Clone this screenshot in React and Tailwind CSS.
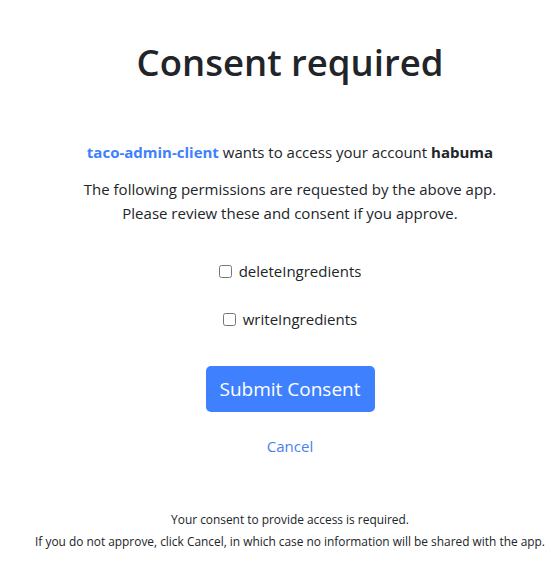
export default function App() {
  return (
    <div className="min-h-[580px] bg-white text-[#212529] font-['Open_Sans',sans-serif] text-center">
      <div className="pt-[38px] pl-[23px] flex flex-col items-center">
        <h1 className="text-[36.5px] leading-[48px] font-semibold">Consent required</h1>
        <p className="mt-[54px] text-[15px] leading-[24px]">
          <span className="font-bold text-[#3f80ff]">taco-admin-client</span> wants to access your account{' '}
          <span className="font-bold">habuma</span>
        </p>
        <p className="mt-[13px] text-[15px] leading-[24px]">
          The following permissions are requested by the above app.
          <br />
          Please review these and consent if you approve.
        </p>
        <div className="mt-[34px] flex flex-col items-center gap-[24px] text-[15px] leading-[24px]">
          <label className="flex items-center gap-[7px]">
            <input type="checkbox" className="w-[13px] h-[13px]" />
            <span>deleteIngredients</span>
          </label>
          <label className="flex items-center gap-[7px]">
            <input type="checkbox" className="w-[13px] h-[13px]" />
            <span>writeIngredients</span>
          </label>
        </div>
        <button className="mt-[35px] h-[46px] px-[14px] rounded-[5px] bg-[#3f80ff] text-white text-[19px]">
          Submit Consent
        </button>
        <a href="#" className="mt-[22px] text-[15px] leading-[24px] text-[#4a7ff0]">Cancel</a>
        <div className="mt-[50px] text-[11.9px] leading-[22px]">
          <p>Your consent to provide access is required.</p>
          <p>If you do not approve, click Cancel, in which case no information will be shared with the app.</p>
        </div>
      </div>
    </div>
  );
}
